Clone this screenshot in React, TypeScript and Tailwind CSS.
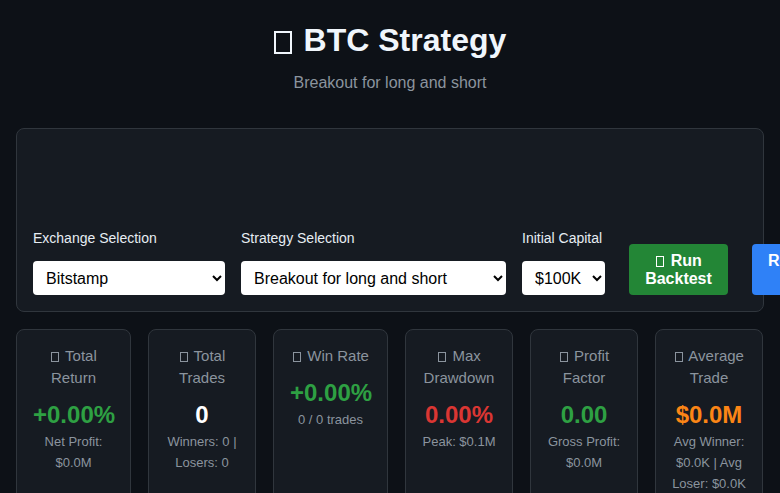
import React from "react";

type Stat = {
    title: string;
    value: string;
    valueClass: string;
    sub: string;
    width: string;
};

const stats: Stat[] = [
    { title: "Total Return", value: "+0.00%", valueClass: "text-[#2ea043]", sub: "Net Profit: $0.0M", width: "w-[115px]" },
    { title: "Total Trades", value: "0", valueClass: "text-[#ffffff]", sub: "Winners: 0 | Losers: 0", width: "w-[108px]" },
    { title: "Win Rate", value: "+0.00%", valueClass: "text-[#2ea043]", sub: "0 / 0 trades", width: "w-[115px]" },
    { title: "Max Drawdown", value: "0.00%", valueClass: "text-[#da3633]", sub: "Peak: $0.1M", width: "w-[108px]" },
    { title: "Profit Factor", value: "0.00", valueClass: "text-[#2ea043]", sub: "Gross Profit: $0.0M", width: "w-[108px]" },
    { title: "Average Trade", value: "$0.0M", valueClass: "text-[#fb8516]", sub: "Avg Winner: $0.0K | Avg Loser: $0.0K", width: "w-[108px]" },
];

// missing-glyph box, the emoji in the original shows up as this
const Tofu: React.FC<{ className?: string }> = ({ className }) => (
    <span className={`inline-block border border-current align-[-0.08em] ${className ?? ""}`} />
);

const StatCard: React.FC<{ stat: Stat }> = ({ stat }) => (
    <div className={`${stat.width} shrink-0 rounded-lg border border-[#30363d] bg-[#161b22] px-4 pt-[15px] pb-4 text-center`}>
        <div className="text-[15px] leading-[22px] text-[#8b949e]">
            <Tofu className="mr-[2px] ml-[1px] h-[10px] w-[8px]" /> {stat.title}
        </div>
        <div className={`mt-3 text-[24px] leading-[28px] font-bold ${stat.valueClass}`}>{stat.value}</div>
        <div className="mt-[2px] text-[13px] leading-[21px] text-[#8b949e]">{stat.sub}</div>
    </div>
);

export default function App() {
    return (
        <div className="h-screen w-screen overflow-hidden bg-[#0d1117] px-4 font-['Liberation_Sans',Arial,sans-serif]">
            {/* header */}
            <div className="pt-[21px] text-center">
                <h1 className="text-[32px] leading-[38px] font-bold text-[#f0f6fc]">
                    <Tofu className="mr-[3px] h-[23px] w-[18px] border-2 align-[-0.05em]" /> BTC Strategy
                </h1>
                <p className="mt-[15px] text-[16px] leading-[18px] text-[#8b949e]">Breakout for long and short</p>
            </div>

            {/* controls */}
            <div className="mt-[36px] flex h-[184px] items-end gap-4 rounded-lg border border-[#30363d] bg-[#161b22] p-4">
                <div className="flex shrink-0 flex-col">
                    <label className="mb-[13px] text-[14px] leading-[20px] text-[#e6edf3]">Exchange Selection</label>
                    <select className="h-[34px] w-[192px] rounded bg-white pr-1 pl-[9px] text-[16px] text-black" defaultValue="bitstamp">
                        <option value="bitstamp">Bitstamp</option>
                    </select>
                </div>
                <div className="flex shrink-0 flex-col">
                    <label className="mb-[13px] text-[14px] leading-[20px] text-[#e6edf3]">Strategy Selection</label>
                    <select className="h-[34px] w-[265px] rounded bg-white pr-1 pl-[9px] text-[16px] text-black" defaultValue="breakout">
                        <option value="breakout">Breakout for long and short</option>
                    </select>
                </div>
                <div className="flex shrink-0 flex-col">
                    <label className="mb-[13px] text-[14px] leading-[20px] text-[#e6edf3]">Initial Capital</label>
                    <select className="h-[34px] w-[83px] rounded bg-white pr-1 pl-[9px] text-[16px] text-black" defaultValue="100k">
                        <option value="100k">$100K</option>
                    </select>
                </div>
                <button className="ml-2 h-[51px] w-[99px] shrink-0 rounded bg-[#238636] px-4 text-[16px] leading-[18px] font-bold text-white">
                    <Tofu className="mr-[2px] ml-[1px] h-[11px] w-[8px]" /> Run Backtest
                </button>
                <button className="ml-2 h-[51px] w-[90px] shrink-0 rounded bg-[#2f81f7] px-4 text-center text-[16px] leading-[18px] font-bold text-white">
                    Refresh Data
                </button>
            </div>

            {/* stats */}
            <div className="mt-[17px] flex items-stretch gap-[17px]">
                {stats.map((s) => (
                    <StatCard key={s.title} stat={s} />
                ))}
            </div>
        </div>
    );
}
